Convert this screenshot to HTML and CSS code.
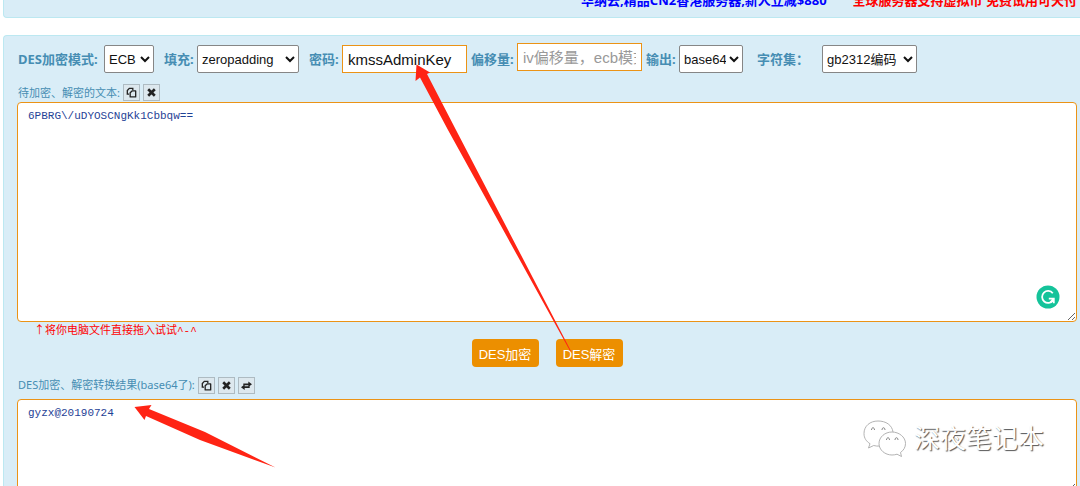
FILE: index.html
```html
<!DOCTYPE html>
<html lang="zh-CN">
<head>
<meta charset="utf-8">
<title>DES加密解密</title>
<link rel="stylesheet" href="styles.css">
</head>
<body>
<svg class="sprite" aria-hidden="true">
  <symbol id="copy" viewBox="0 0 10 10"><path d="M2.800 6.500H1.200V3.200L3 1.200h3.200v1.600" fill="none" stroke="#222" stroke-width="1.200"/><path d="M3.800 5.200L5.500 3.600H8.800V9h-5z" fill="none" stroke="#222" stroke-width="1.200" stroke-linejoin="round"/></symbol>
  <symbol id="times" viewBox="0 0 10 10"><path d="M2 2l6 6M8 2L2 8" fill="none" stroke="#222" stroke-width="2.4"/></symbol>
  <symbol id="swap" viewBox="0 0 12 10"><path d="M2.500 4.800V2.700H8V.5l4 3-4 3V4.800zM9.500 5.800v2H4V10L0 7l4-3v1.800z" fill="#222"/></symbol>
</svg>
<header class="panel ads">
  <a class="ad-blue" href="#">华纳云,精品CN2香港服务器,新人立减$880</a>
  <a class="ad-red" href="#">全球服务器支持虚拟币 免费试用可天付</a>
</header>
<main class="panel tool">
  <form class="options">
    <label for="mode">DES加密模式:</label>
    <select id="mode"><option>ECB</option></select>
    <label class="spaced" for="pad">填充:</label>
    <select id="pad"><option>zeropadding</option></select>
    <label class="spaced" for="key">密码:</label>
    <input id="key" type="text" value="kmssAdminKey">
    <label for="iv">偏移量:</label>
    <input id="iv" class="iv" type="text" placeholder="iv偏移量，ecb模式">
    <label for="out">输出:</label>
    <select id="out"><option>base64</option></select>
    <label class="spaced" for="charset">字符集：</label>
    <select id="charset"><option>gb2312编码</option></select>
  </form>
  <div class="caption">
    <label for="source">待加密、解密的文本:</label>
    <button class="mini" type="button" aria-label="复制"><svg><use href="#copy"/></svg></button>
    <button class="mini" type="button" aria-label="清空"><svg><use href="#times"/></svg></button>
  </div>
  <div class="editor">
    <textarea id="source" class="source" spellcheck="false">6PBRG\/uDYOSCNgKk1Cbbqw==</textarea>
    <svg class="checker" viewBox="0 0 24 24" aria-hidden="true"><circle cx="12" cy="12" r="11.5" fill="#15c39a"/><path d="M16.8 8.2A6 6 0 1 0 17 15.4M12.8 13.7h5v4.6M17.5 14l-3 3.2" fill="none" stroke="#fff" stroke-width="1.8"/></svg>
  </div>
  <p class="hint">↑将你电脑文件直接拖入试试<span class="face">^-^</span></p>
  <div class="actions">
    <button class="action" type="button">DES加密</button>
    <button class="action" type="button">DES解密</button>
  </div>
  <div class="caption">
    <label for="result">DES加密、解密转换结果(base64了):</label>
    <button class="mini" type="button" aria-label="复制"><svg><use href="#copy"/></svg></button>
    <button class="mini" type="button" aria-label="清空"><svg><use href="#times"/></svg></button>
    <button class="mini" type="button" aria-label="交换"><svg><use href="#swap"/></svg></button>
  </div>
  <textarea id="result" class="result" spellcheck="false">gyzx@20190724</textarea>
</main>
<svg class="arrows" width="600" height="486" viewBox="0 0 600 486" aria-hidden="true">
  <path fill="#ff2414" d="M416.500 64.500L430 72.500L427 74L456 130L572 353L569.500 350L448 130L420 77.500L415.500 81z"/>
  <path fill="#ff2414" d="M134.500 407L151.500 405L149 409L205 432L275.500 467.500L200 440L146 416L144.500 420z"/>
</svg>
<div class="watermark">
  <svg viewBox="0 0 44 38" aria-hidden="true"><g fill="#fff" stroke="#aaa" stroke-width=".9"><path d="M15 2C7 2 1 7 1 14.500c0 5 2.600 8 6 10.200L5.500 29l5.200-2.500c2 .6 4 .8 6.300.5h3C30 26 31 19 30 13 29 6 23 2 15 2z"/><path d="M29 13c-7 0-13 5-13 11.500S22 36 29 36c2 0 3.500-.3 5-.8l4.500 2.300-1-4c3.200-2.200 5-5.300 5-9C42.500 18 36 13 29 13z"/><path d="M8.500 11c0-3 3-3 3 0M19 11c0-3 3-3 3 0M23.500 21c0-3 3-3 3 0M32 21c0-3 3-3 3 0" stroke="#777"/></g></svg>
  <span>深夜笔记本</span>
</div>
</body>
</html>
```
FILE: styles.css
```css
* { box-sizing: border-box; }
html, body { height: 100%; }
body {
  margin: 0;
  padding-left: 3px;
  overflow: hidden;
  position: relative;
  display: flex;
  flex-direction: column;
  gap: 17px;
  background: #fff;
  font-family: "Noto Sans", "Noto Sans CJK SC", sans-serif;
  color: #468db3;
}
.sprite { display: none; }
.panel {
  background: #d9edf7;
  border: 1px solid #bce8f1;
  border-right: 0;
  border-radius: 4px 0 0 4px;
}
.ads {
  flex: none;
  display: flex;
  justify-content: flex-end;
  gap: 26px;
  margin-top: -12px;
  height: 30px;
  padding-right: 3px;
  font-size: 13px;
  line-height: 22px;
  font-weight: bold;
}
.ads a { text-decoration: none; white-space: nowrap; }
.ad-blue { color: #00f; }
.ad-red { color: #f00; }
.tool {
  flex: 1;
  min-height: 0;
  display: flex;
  flex-direction: column;
  margin-bottom: -8px;
  padding: 7px 3px 0 13px;
}
.tool > * { flex: none; }
.options {
  display: grid;
  grid-template-columns: 87px 50px 43px 102px 43px 125px 50px 125px 37px 64px 79px 95px;
  align-items: center;
  height: 32px;
}
.options label {
  font-size: 13px;
  font-weight: bold;
  line-height: 20px;
  white-space: nowrap;
  padding-left: 1px;
}
.options input + label { padding-left: 4px; }
.options label.spaced { padding-left: 10px; }
.options label[for="charset"] { padding-left: 14px; }
.options select, .options input {
  width: 100%;
  min-width: 0;
  height: 28px;
  color: #111;
  background: #fff;
  font-family: "Liberation Sans", "Noto Sans CJK SC", sans-serif;
}
.options select {
  border: 1px solid #868686;
  border-radius: 2px;
  font-size: 13px;
  padding: 0;
}
.options input {
  border: 1px solid #eb9316;
  padding: 0 5px;
  font-size: 15px;
}
.options .iv { align-self: start; }
.iv::placeholder { color: #999; }
.caption {
  display: flex;
  align-items: center;
  gap: 3px;
  height: 27px;
  padding-top: 8px;
  font-size: 11px;
  line-height: 18px;
}
.caption label { padding-left: 1px; }
.mini {
  display: grid;
  place-items: center;
  width: 17px;
  height: 17px;
  padding: 0;
  border: 1px solid #aebbc2;
  background: #dde8ee;
}
.mini svg { width: 11px; height: 11px; }
.editor { position: relative; display: flex; }
textarea {
  display: block;
  width: 100%;
  margin: 0;
  padding: 5px 10px;
  border: 1px solid #eb9316;
  border-radius: 4px;
  background: #fff;
  color: #1f4296;
  font: 11px/16px "Liberation Mono", monospace;
}
.source { height: 220px; }
.tool > .result { flex: 1; min-height: 0; }
.checker {
  position: absolute;
  right: 17px;
  bottom: 13px;
  width: 24px;
  height: 24px;
}
.hint {
  margin: 0;
  padding-left: 17px;
  font-size: 11px;
  line-height: 16px;
  color: #f00;
}
.face { font-family: "Liberation Mono", monospace; }
.actions {
  display: flex;
  justify-content: center;
  gap: 17px;
}
.action {
  width: 67px;
  height: 28px;
  padding: 0;
  border: 0;
  border-radius: 4px;
  background: #ec8f00;
  color: #fff;
  font: 13px "Liberation Sans", "Noto Sans CJK SC", sans-serif;
}
.actions + .caption { height: 32px; padding-top: 4px; }
.arrows { position: absolute; left: 0; top: 0; pointer-events: none; }
.watermark {
  position: absolute;
  right: 36px;
  bottom: 29px;
  display: flex;
  align-items: center;
  gap: 7px;
  color: #fff;
  font-size: 26px;
  line-height: 38px;
  text-shadow: 1px 1px 1px #555;
}
.watermark svg { width: 44px; height: 38px; }
```
